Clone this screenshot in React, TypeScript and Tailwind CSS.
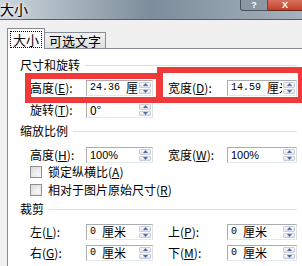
import React from "react";

const cjk = "font-['Noto_Sans_CJK_SC',sans-serif]";

function Spin() {
  return (
    <div className="flex flex-col w-[12px] shrink-0 m-[1px] gap-[1px]">
      <div className="flex-1 flex items-center justify-center rounded-[1px] border border-[#c9ced6] bg-gradient-to-b from-[#f7f8fa] to-[#dfe3ea]">
        <svg width="5" height="3" viewBox="0 0 5 3">
          <path d="M0 3 L2.5 0 L5 3 Z" fill="#4f6aa8" />
        </svg>
      </div>
      <div className="flex-1 flex items-center justify-center rounded-[1px] border border-[#c9ced6] bg-gradient-to-b from-[#f7f8fa] to-[#dfe3ea]">
        <svg width="5" height="3" viewBox="0 0 5 3">
          <path d="M0 0 L2.5 3 L5 0 Z" fill="#4f6aa8" />
        </svg>
      </div>
    </div>
  );
}

function Field({ children, wide }: { children: React.ReactNode; wide?: boolean }) {
  return (
    <div
      className={`flex h-[16px] border border-[#abadb3] border-r-[#dbdfe6] border-b-[#e3e9ef] bg-white ${
        wide ? "w-[70px]" : "w-[67px]"
      }`}
    >
      <div className="flex-1 min-w-0 flex items-center [clip-path:inset(-3px_0_-3px_0)] whitespace-nowrap pl-[3px] text-[12px] leading-[12px] text-black">
        {children}
      </div>
      <Spin />
    </div>
  );
}

function Label({ text, k, wide }: { text: string; k: string; wide?: boolean }) {
  return (
    <span className={`shrink-0 text-[12px] leading-[14px] text-black ${wide ? "w-[59px]" : "w-[56px]"}`}>
      {text}(<u>{k}</u>):
    </span>
  );
}

function Header({ text }: { text: string }) {
  return (
    <div className="flex items-center h-[16px] pr-[5px]">
      <span className="text-[12px] leading-[14px] text-black">{text}</span>
      <div className="flex-1 h-px bg-[#d5dfe5] ml-[5px]" />
    </div>
  );
}

function Check({ text, k }: { text: string; k: string }) {
  return (
    <div className="flex items-center h-[14px] ml-[10px] gap-[6px]">
      <div className="w-[12px] h-[12px] border border-[#8f8f8f] bg-gradient-to-br from-[#dcdcdc] to-[#f6f6f6] p-[2px]">
        <div className="w-full h-full bg-gradient-to-br from-[#e4e4e4] to-[#fafafa]" />
      </div>
      <span className="text-[12px] leading-[14px] text-black whitespace-nowrap">
        {text}(<u>{k}</u>)
      </span>
    </div>
  );
}

const mono = "font-['Liberation_Mono',monospace] text-[10px]";

export default function App() {
  return (
    <div className={`relative w-[302px] h-[266px] overflow-hidden bg-[#f0f0f0] flex flex-col ${cjk}`}>
      {/* Title bar */}
      <div className="flex h-[20px] shrink-0 bg-gradient-to-r from-[#cdd6dd] via-[#7d8d9b] to-[#a4b2bd] border-b border-[#55606a]">
        <span className="text-[14px] leading-[18px] text-black [text-shadow:0_0_4px_#fff,0_0_6px_#fff]">大小</span>
        <div className="ml-auto flex h-[11px]">
          <div className="w-[28px] flex items-center justify-center border border-t-0 border-[#4a525a] rounded-bl-[3px] bg-[#8b97a2] text-white text-[9px] leading-[9px] font-bold font-['Liberation_Sans',sans-serif]">
            ?
          </div>
          <div className="w-[34px] flex items-center justify-center border-b border-[#6b2a20] bg-gradient-to-b from-[#d9705c] to-[#c0402a] text-white text-[9px] leading-[9px] font-bold font-['Liberation_Sans',sans-serif]">
            X
          </div>
        </div>
      </div>

      {/* Tabs */}
      <div className="flex items-end h-[28px] pl-[7px] shrink-0">
        <div className="h-[21px] w-[38px] flex items-center justify-center border border-b-0 border-[#898c95] bg-white relative z-10 -mb-px">
          <span className="border border-dotted border-black px-[2px] text-[13px] leading-[15px] text-black">大小</span>
        </div>
        <div className="h-[16px] w-[61px] flex items-center justify-center border border-l-0 border-b-0 border-[#898c95] bg-gradient-to-b from-[#f2f2f2] to-[#e0e0e0] text-[13px] leading-[14px] text-black">
          可选文字
        </div>
      </div>

      {/* Panel */}
      <div className="flex-1 ml-[7px] border-l border-t border-[#898c95] bg-white pl-[12px] pt-[8px] flex flex-col">
        <Header text="尺寸和旋转" />
        <div className="flex items-center ml-[10px] mt-[7px]">
          <Label text="高度" k="E" />
          <Field>
            <span className={mono}>24.36&nbsp;</span>厘米
          </Field>
          <div className="w-[15px]" />
          <Label text="宽度" k="D" wide />
          <Field wide>
            <span className={mono}>14.59&nbsp;</span>厘米
          </Field>
        </div>
        <div className="flex items-center ml-[10px] mt-[6px]">
          <Label text="旋转" k="T" />
          <Field>0°</Field>
        </div>

        <div className="mt-[5px]">
          <Header text="缩放比例" />
        </div>
        <div className="flex items-center ml-[10px] mt-[8px]">
          <Label text="高度" k="H" />
          <Field>
            <span className="font-['Liberation_Sans',sans-serif] text-[11px]">100%</span>
          </Field>
          <div className="w-[15px]" />
          <Label text="宽度" k="W" wide />
          <Field wide>
            <span className="font-['Liberation_Sans',sans-serif] text-[11px]">100%</span>
          </Field>
        </div>
        <div className="mt-[2px]">
          <Check text="锁定纵横比" k="A" />
        </div>
        <div className="mt-[4px]">
          <Check text="相对于图片原始尺寸" k="R" />
        </div>

        <div className="mt-[4px]">
          <Header text="裁剪" />
        </div>
        <div className="flex items-center ml-[10px] mt-[7px]">
          <Label text="左" k="L" />
          <Field>
            <span className={mono}>0&nbsp;</span>厘米
          </Field>
          <div className="w-[15px]" />
          <Label text="上" k="P" wide />
          <Field wide>
            <span className={mono}>0&nbsp;</span>厘米
          </Field>
        </div>
        <div className="flex items-center ml-[10px] mt-[5px]">
          <Label text="右" k="G" />
          <Field>
            <span className={mono}>0&nbsp;</span>厘米
          </Field>
          <div className="w-[15px]" />
          <Label text="下" k="M" wide />
          <Field wide>
            <span className={mono}>0&nbsp;</span>厘米
          </Field>
        </div>
      </div>

      {/* Red annotation boxes */}
      <div className="absolute left-[25px] top-[73px] w-[137px] h-[30px] border-[6px] border-[#f03a3a]" />
      <div className="absolute left-[157px] top-[67px] w-[145px] h-[36px] border-[6px] border-r-[4px] border-[#f03a3a]" />
    </div>
  );
}
